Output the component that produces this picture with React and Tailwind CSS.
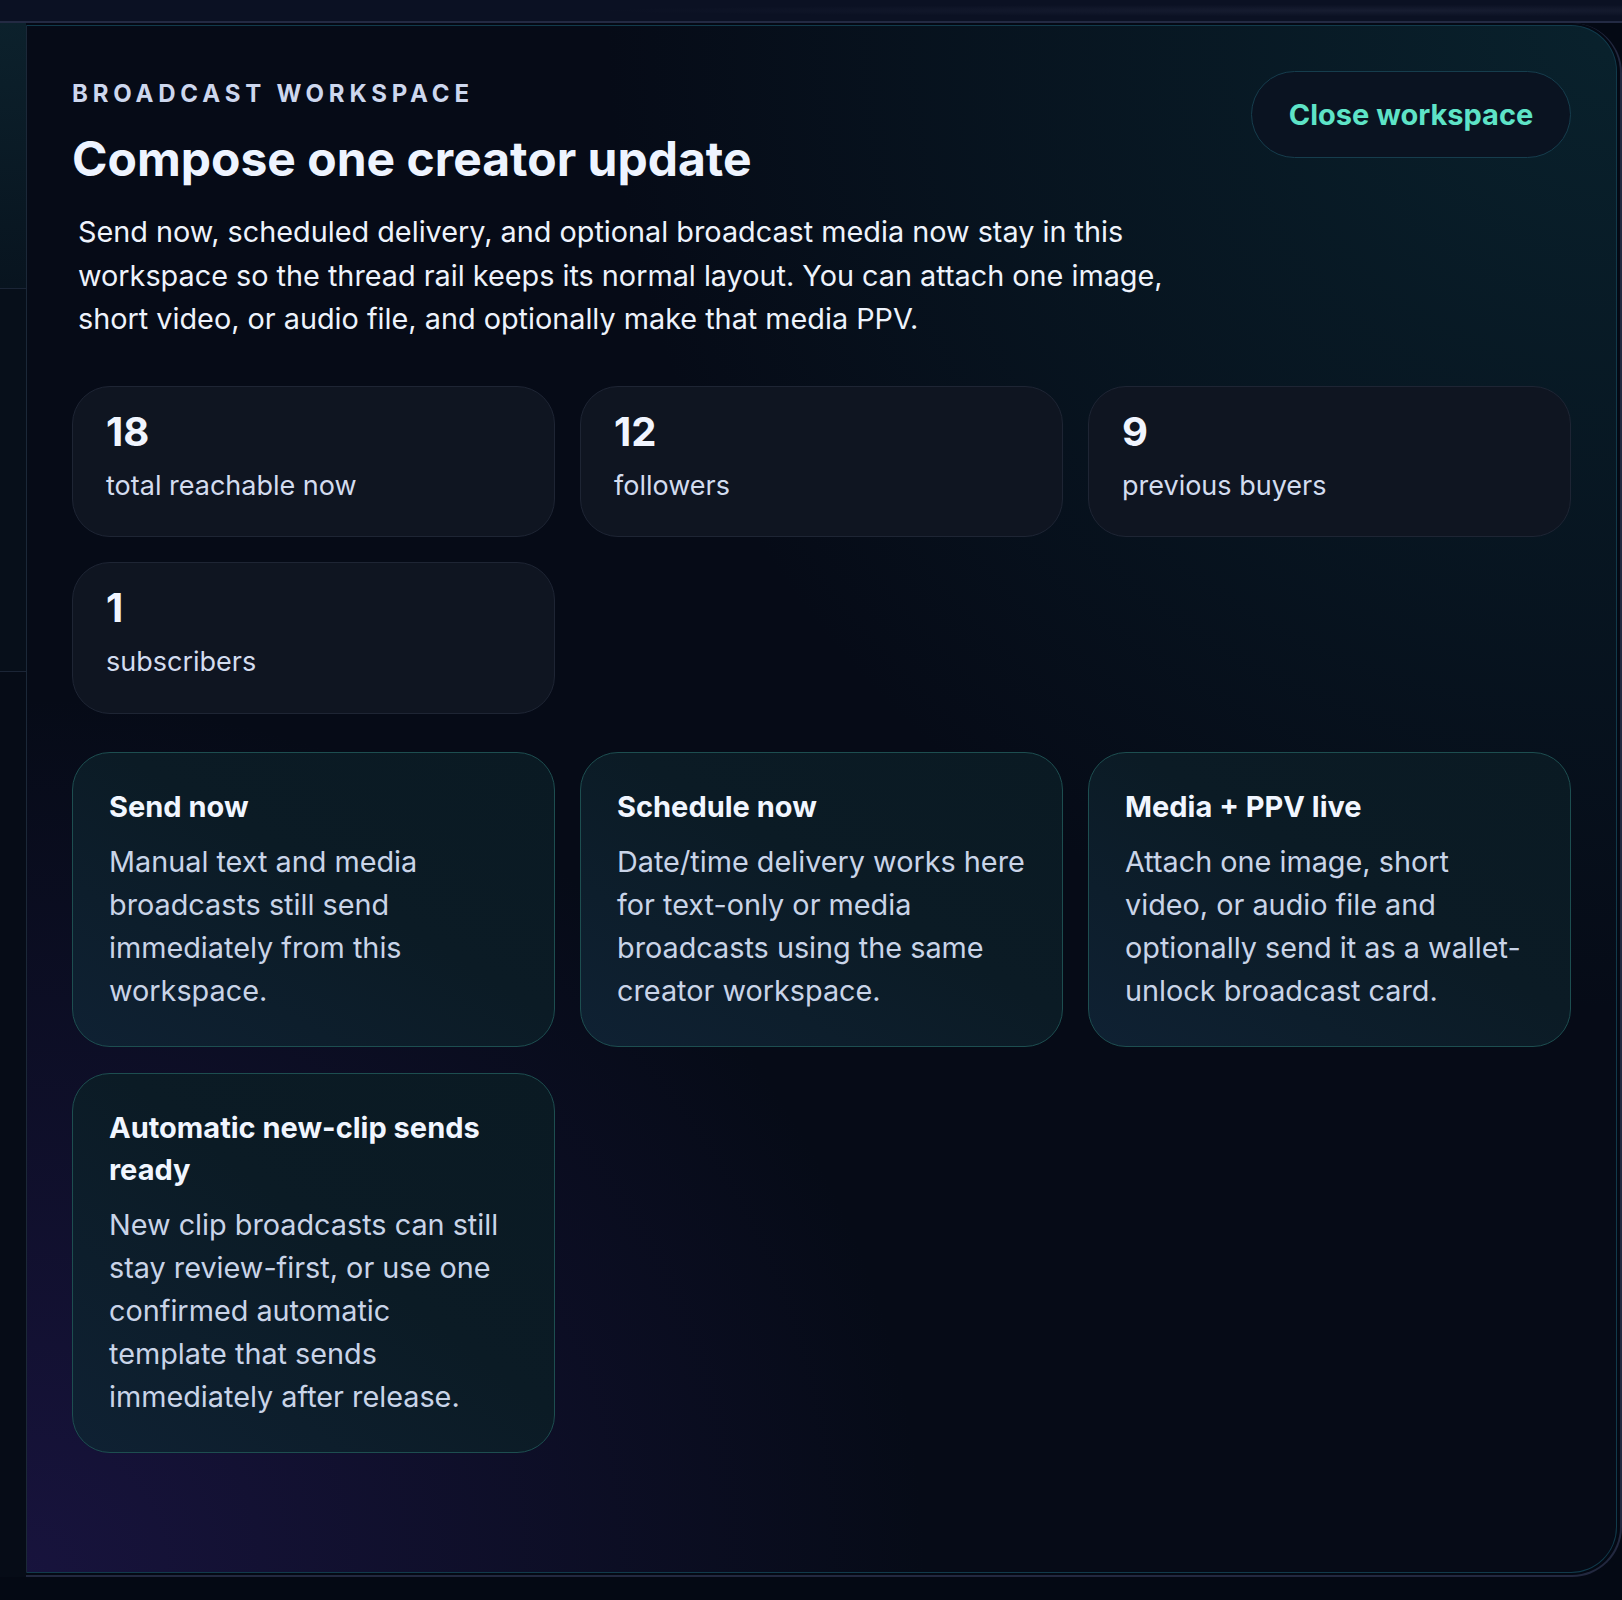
const stats = [
  { value: '18', label: 'total reachable now' },
  { value: '12', label: 'followers' },
  { value: '9', label: 'previous buyers' },
  { value: '1', label: 'subscribers' },
];

const features = [
  {
    title: 'Send now',
    lines: ['Manual text and media', 'broadcasts still send', 'immediately from this', 'workspace.'],
  },
  {
    title: 'Schedule now',
    lines: ['Date/time delivery works here', 'for text-only or media', 'broadcasts using the same', 'creator workspace.'],
  },
  {
    title: 'Media + PPV live',
    lines: ['Attach one image, short', 'video, or audio file and', 'optionally send it as a wallet-', 'unlock broadcast card.'],
  },
  {
    title: 'Automatic new-clip sends ready',
    lines: [
      'New clip broadcasts can still',
      'stay review-first, or use one',
      'confirmed automatic',
      'template that sends',
      'immediately after release.',
    ],
  },
];

function StatCard({ value, label }) {
  return (
    <div className="rounded-[38px] border border-[#1e2534] bg-[#0f1521] px-[33px] pt-[21px] pb-[29px]">
      <div className="text-[40px] leading-[1.2] font-bold text-[#f1f5ff]">{value}</div>
      <div className="mt-[8px] text-[27px] leading-[43.5px] text-[#d3dcef]">{label}</div>
    </div>
  );
}

function FeatureCard({ title, lines }) {
  return (
    <div className="rounded-[38px] border border-[#1d4e50] bg-[linear-gradient(to_top_right,#0f2133,#0b1b25_55%,#0a1a23)] px-[36px] pt-[33px] pb-[34px]">
      <h3 className="text-[29px] leading-[42px] font-bold text-[#f1f6ff]">{title}</h3>
      <p className="mt-[12px] text-[28.8px] leading-[43px] text-[#c9d4e8]">
        {lines.map((line) => (
          <span key={line} className="block whitespace-nowrap">
            {line}
          </span>
        ))}
      </p>
    </div>
  );
}

export default function App() {
  return (
    <div className="flex h-[1600px] w-[1622px] flex-col bg-[#040914] font-['Inter',sans-serif]">
      {/* top strip */}
      <div className="h-[21px] bg-[#0b1123] bg-[image:radial-gradient(ellipse_at_85%_50%,#171d31,#0b1123_40%)]" />

      <div className="flex h-[1556px] border-t-2 border-[#232a43]">
        {/* thread rail peeking behind */}
        <aside className="flex w-[26px] flex-col">
          <div className="h-[265px] bg-[linear-gradient(to_bottom,#0c212c,#08141f)]" />
          <div className="h-[383px] border-t border-[#1b2536] bg-[#070f1a]" />
          <div className="flex-1 border-t border-[#1b2536] bg-[#060c17]" />
        </aside>

        <div className="flex-1 rounded-r-[50px] border-r-2 border-b-2 border-[#22283f] pt-[2px] pr-[3px] pb-[2px]">
          <section className="h-full rounded-r-[46px] border border-[#113a4b] border-l-[#1b2838] bg-[#060b17] bg-[image:radial-gradient(ellipse_at_100%_0%,rgba(12,56,66,0.5),transparent_45%),radial-gradient(ellipse_at_0%_100%,rgba(38,26,92,0.55),transparent_40%)] px-[45px] pt-[45px]">
            <div className="flex items-start justify-between">
              <div>
                <div className="mt-[9px] text-[24px] leading-[1.2] font-bold tracking-[0.2em] text-[#cdd7ee]">
                  BROADCAST WORKSPACE
                </div>
                <h1 className="mt-[21px] text-[48px] leading-[1.2] font-bold text-[#eef4ff]">
                  Compose one creator update
                </h1>
              </div>
              <button className="h-[87px] w-[320px] rounded-full border-[1.5px] border-[#163d4d] bg-[#0a1321] text-[29px] font-bold text-[#5ee3c7]">
                Close workspace
              </button>
            </div>

            <p className="mt-[23px] ml-[6px] max-w-[1110px] text-[28.8px] leading-[43.5px] text-[#eef3fc]">
              Send now, scheduled delivery, and optional broadcast media now stay in this workspace so the thread
              rail keeps its normal layout. You can attach one image, short video, or audio file, and optionally
              make that media PPV.
            </p>

            <div className="mt-[45px] grid grid-cols-3 gap-x-[25px] gap-y-[25px]">
              {stats.map((s) => (
                <StatCard key={s.label} value={s.value} label={s.label} />
              ))}
            </div>

            <div className="mt-[38px] grid grid-cols-3 gap-x-[25px] gap-y-[26px]">
              {features.map((f) => (
                <FeatureCard key={f.title} title={f.title} lines={f.lines} />
              ))}
            </div>
          </section>
        </div>
      </div>

      <div className="flex-1" />
    </div>
  );
}
